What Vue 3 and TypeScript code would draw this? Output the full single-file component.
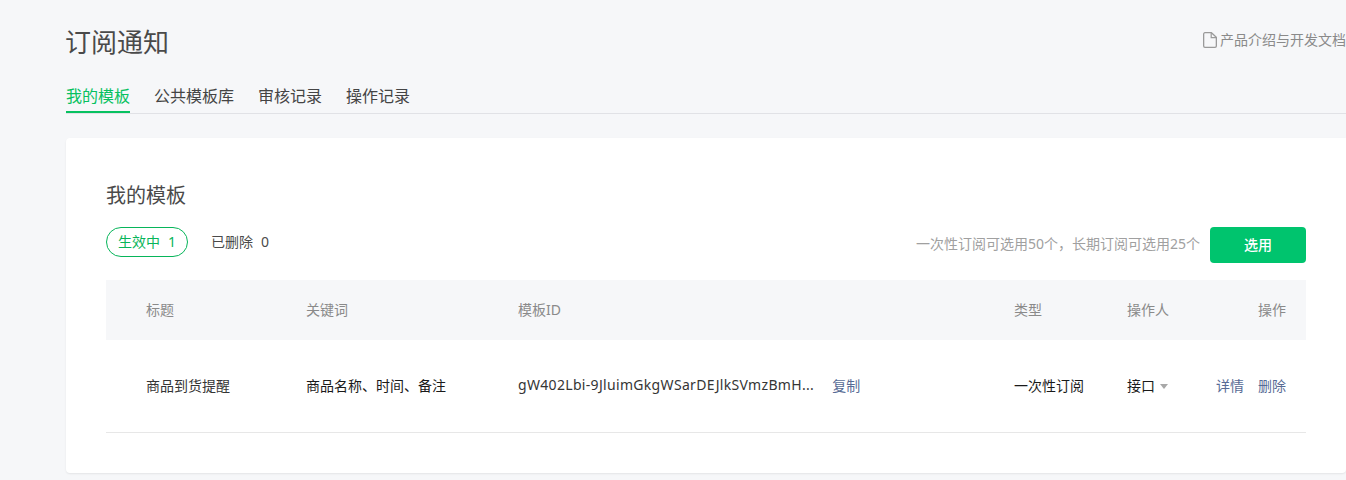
<script setup lang="ts">
const tabs: string[] = ['我的模板', '公共模板库', '审核记录', '操作记录']
</script>

<template>
  <div class="page">
    <header class="head">
      <h1 class="title">订阅通知</h1>
      <a class="doc">
        <svg class="doc-icon" width="15" height="16" viewBox="0 0 15 16" fill="none">
          <path d="M1.65 2.2C1.65 1.3 2.2 .7 3 .7H9.4L14.35 5.4V14C14.35 14.8 13.8 15.35 13 15.35H3C2.2 15.35 1.65 14.8 1.65 14V2.2Z" stroke="#9a9a9a" stroke-width="1.3" />
          <path d="M9.2 .7V5.6H14.35" stroke="#9a9a9a" stroke-width="1.2" />
        </svg>
        <span>产品介绍与开发文档</span>
      </a>
    </header>
    <nav class="tabs">
      <span v-for="(t, i) in tabs" :key="t" class="tab" :class="{ on: i === 0 }">{{ t }}</span>
    </nav>
    <section class="card">
      <h2 class="card-title">我的模板</h2>
      <div class="toolbar">
        <span class="pill">生效中<i>1</i></span>
        <span class="deleted">已删除<i>0</i></span>
        <span class="hint">一次性订阅可选用50个，长期订阅可选用25个</span>
        <button class="btn">选用</button>
      </div>
      <div class="grid thead">
        <span>标题</span>
        <span>关键词</span>
        <span>模板ID</span>
        <span>类型</span>
        <span>操作人</span>
        <span>操作</span>
      </div>
      <div class="grid tbody">
        <span class="cell-title">商品到货提醒</span>
        <span>商品名称、时间、备注</span>
        <span class="id-cell">
          <span class="id">gW402Lbi-9JluimGkgWSarDEJlkSVmzBmH...</span>
          <a class="link">复制</a>
        </span>
        <span>一次性订阅</span>
        <span class="operator">接口<b class="caret"></b></span>
        <span class="ops"><a class="link">详情</a><a class="link">删除</a></span>
      </div>
    </section>
  </div>
</template>

<style scoped>
.page {
  height: 480px;
  box-sizing: border-box;
  padding-left: 66px;
  overflow: hidden;
  background: #f6f7f9;
  font-family: "Noto Sans", "Noto Sans CJK SC", sans-serif;
  color: #353535;
}
.head {
  height: 83px;
  display: flex;
  justify-content: space-between;
  align-items: flex-start;
}
.title {
  margin: 23px 0 0 -1px;
  font-size: 26px;
  line-height: 38px;
  font-weight: 400;
  color: #4a4a4a;
}
.doc {
  display: flex;
  align-items: center;
  margin-top: 30px;
  width: 144px;
  flex: none;
  font-size: 14px;
  line-height: 20px;
  color: #8a8a8a;
  white-space: nowrap;
}
.doc-icon {
  flex: none;
  margin-right: 3px;
}
.tabs {
  display: flex;
  gap: 24px;
  height: 30px;
  border-bottom: 1px solid #e1e2e6;
}
.tab {
  height: 30px;
  box-sizing: border-box;
  font-size: 16px;
  line-height: 26px;
  color: #444;
}
.tab.on {
  color: #07c160;
  border-bottom: 2px solid #07c160;
}
.card {
  margin-top: 24px;
  height: 335px;
  box-sizing: border-box;
  padding: 40px 40px 0;
  background: #fff;
  border-radius: 4px 0 4px 4px;
  box-shadow: 0 1px 2px rgba(0, 0, 0, 0.08);
}
.card-title {
  margin: 2px 0 0;
  font-size: 20px;
  line-height: 32px;
  font-weight: 400;
  color: #4a4a4a;
}
.toolbar {
  display: flex;
  align-items: center;
  margin-top: 15px;
  height: 36px;
  margin-bottom: 17px;
  font-size: 14px;
}
.pill {
  box-sizing: border-box;
  width: 82px;
  height: 30px;
  margin-top: -6px;
  border: 1px solid #07b55a;
  border-radius: 15px;
  text-align: center;
  line-height: 28px;
  color: #07b55a;
}
.pill i,
.deleted i {
  font-style: normal;
  margin-left: 8px;
}
.deleted {
  margin-left: 23px;
  margin-top: -8px;
  color: #4a4a4a;
}
.hint {
  margin-left: auto;
  margin-right: 10px;
  margin-bottom: 4px;
  color: #a0a0a0;
}
.btn {
  width: 96px;
  height: 36px;
  border: 0;
  border-radius: 4px;
  background: #00c46e;
  color: #fff;
  font: inherit;
  font-size: 14px;
  font-weight: 500;
  padding: 0 0 2px;
}
.grid {
  display: grid;
  grid-template-columns: 160px 212px 496px 113px 1fr auto;
  align-items: center;
  box-sizing: border-box;
  padding: 0 20px 2px 40px;
  font-size: 14px;
  white-space: nowrap;
}
.thead {
  height: 60px;
  background: #f6f7f9;
  color: #8a8a8a;
}
.tbody {
  height: 93px;
  border-bottom: 1px solid #e7e7e7;
  color: #1a1a1a;
}
.cell-title {
  color: #353535;
}
.id-cell {
  display: flex;
  gap: 18px;
}
.id {
  letter-spacing: 0.32px;
  color: #353535;
}
.link {
  color: #576b95;
}
.caret {
  display: inline-block;
  width: 0;
  height: 0;
  margin-left: 5px;
  vertical-align: 2px;
  border-left: 4.5px solid transparent;
  border-right: 4.5px solid transparent;
  border-top: 5px solid #a8a8a8;
}
.ops {
  display: flex;
  gap: 14px;
}
</style>
